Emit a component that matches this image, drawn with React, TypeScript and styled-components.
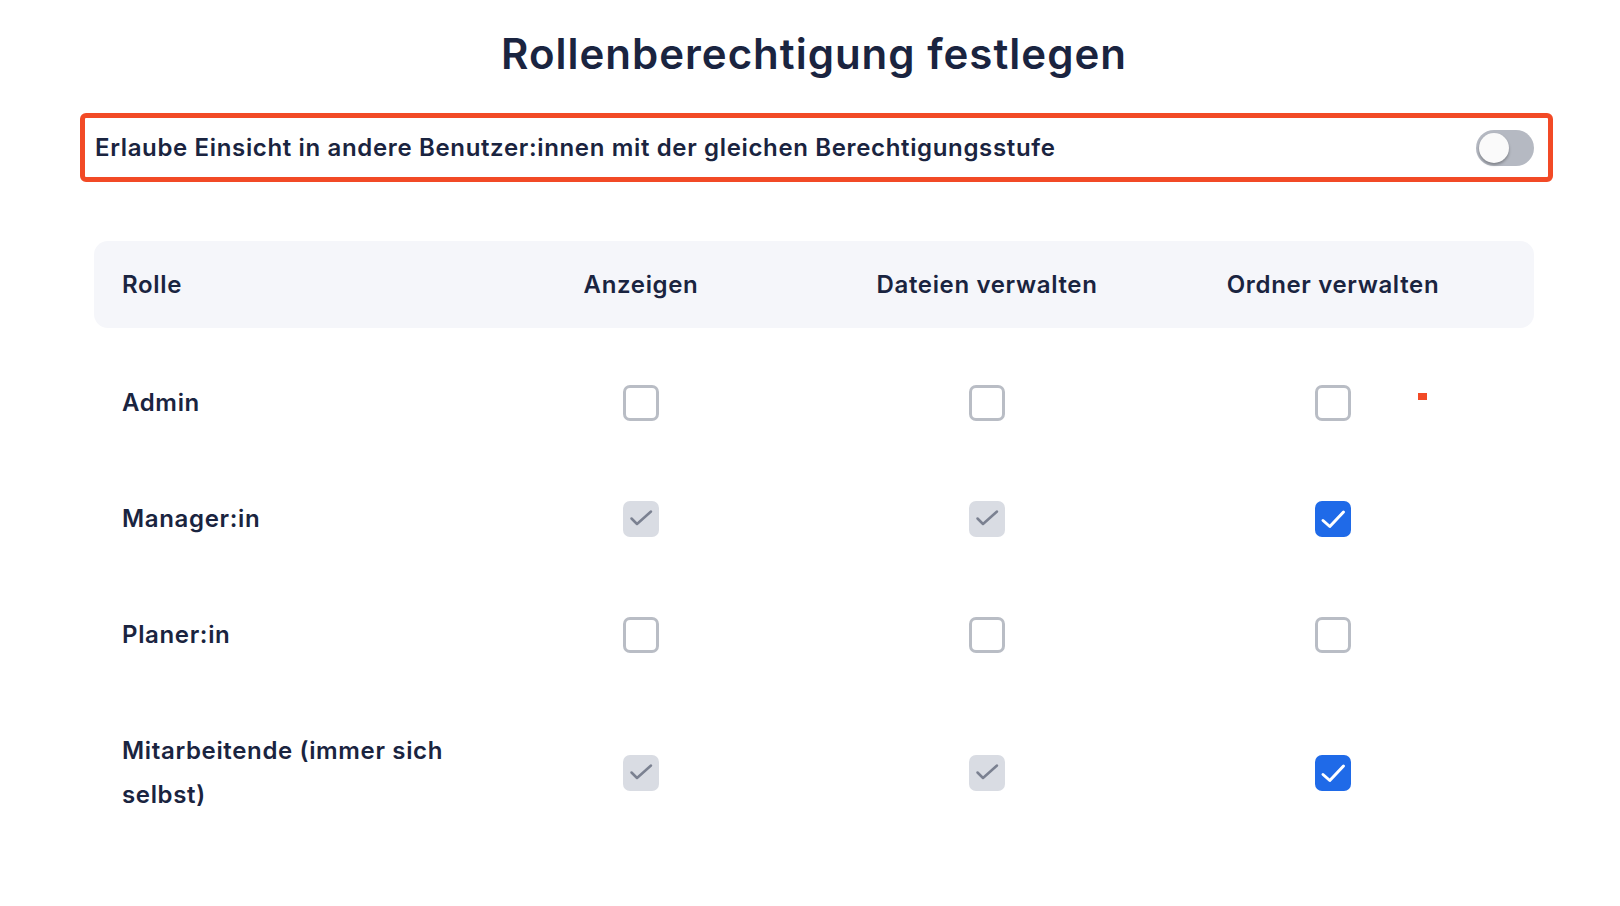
import React from 'react';
import styled, { createGlobalStyle } from 'styled-components';

const GlobalStyle = createGlobalStyle`
  html, body {
    margin: 0;
    padding: 0;
    background: #ffffff;
  }
  body {
    font-family: Inter, "Noto Sans", "Liberation Sans", sans-serif;
    color: #1a2440;
  }
`;

const ink = '#1a2440';

const Page = styled.div`
  width: 1440px;
  padding: 25px 0 40px 94px;
`;

const Title = styled.h1`
  margin: 0;
  font-size: 42px;
  line-height: 58px;
  font-weight: 600;
  text-align: center;
  color: ${ink};
  letter-spacing: 1px;
`;

const Banner = styled.div`
  box-sizing: border-box;
  margin: 30px 0 0 -14px;
  width: 1473px;
  height: 69px;
  border: 5px solid #f24a26;
  border-radius: 6px;
  padding: 0 14px 0 10px;
  display: flex;
  align-items: center;
  justify-content: space-between;
`;

const BannerText = styled.span`
  font-size: 24px;
  font-weight: 600;
  letter-spacing: 0.65px;
  color: ${ink};
`;

const Track = styled.div<{ $on?: boolean }>`
  position: relative;
  width: 58px;
  height: 36px;
  border-radius: 18px;
  background: ${(p) => (p.$on ? '#1f6ae8' : '#b5b9c2')};
`;

const Knob = styled.span`
  position: absolute;
  top: 3px;
  left: 3px;
  width: 30px;
  height: 30px;
  border-radius: 50%;
  background: #fafafa;
  box-shadow: 0 2px 3px rgba(0, 0, 0, 0.3);
`;

const Table = styled.div`
  margin-top: 59px;
`;

const grid = `
  display: grid;
  grid-template-columns: 346px 346px 346px 346px;
  padding: 0 28px;
  align-items: center;
`;

const HeadRow = styled.div`
  ${grid}
  height: 87px;
  background: #f5f6fa;
  border-radius: 14px;
`;

const HeadCell = styled.div<{ $center?: boolean }>`
  font-size: 24px;
  font-weight: 600;
  letter-spacing: 0.65px;
  color: ${ink};
  text-align: ${(p) => (p.$center ? 'center' : 'left')};
`;

const Body = styled.div`
  margin-top: 17px;
`;

const Row = styled.div`
  ${grid}
  padding-top: 36px;
  padding-bottom: 36px;
`;

const RoleName = styled.div`
  font-size: 24px;
  font-weight: 600;
  letter-spacing: 0.65px;
  line-height: 44px;
  color: ${ink};
  padding-right: 16px;
`;

const Cell = styled.div`
  position: relative;
  display: flex;
  justify-content: center;
  align-items: center;
`;

type BoxState = 'empty' | 'locked' | 'checked';

const Box = styled.div<{ $state: BoxState }>`
  box-sizing: border-box;
  width: 36px;
  height: 36px;
  border-radius: 7px;
  display: flex;
  align-items: center;
  justify-content: center;
  border: ${(p) => (p.$state === 'empty' ? '3px solid #b9bdc5' : 'none')};
  background: ${(p) =>
    p.$state === 'checked' ? '#1f6ae8' : p.$state === 'locked' ? '#d9dce3' : '#ffffff'};
`;

const Marker = styled.span`
  position: absolute;
  left: 258px;
  top: 8px;
  width: 9px;
  height: 7px;
  background: #f24a26;
`;

function Checkbox({ state }: { state: BoxState }) {
  return (
    <Box $state={state}>
      {state === 'checked' && (
        <svg width="36" height="36" viewBox="0 0 36 36">
          <path d="M8 19.5 L14.8 25.5 L28.5 11" fill="none" stroke="#fff" strokeWidth="3" strokeLinecap="round" strokeLinejoin="round" />
        </svg>
      )}
      {state === 'locked' && (
        <svg width="36" height="36" viewBox="0 0 36 36">
          <path d="M8.5 17.5 L14 23 L28 10.5" fill="none" stroke="#7b8191" strokeWidth="2.5" strokeLinecap="round" strokeLinejoin="round" />
        </svg>
      )}
    </Box>
  );
}

const roles: { name: string; perms: BoxState[] }[] = [
  { name: 'Admin', perms: ['empty', 'empty', 'empty'] },
  { name: 'Manager:in', perms: ['locked', 'locked', 'checked'] },
  { name: 'Planer:in', perms: ['empty', 'empty', 'empty'] },
  { name: 'Mitarbeitende (immer sich selbst)', perms: ['locked', 'locked', 'checked'] },
];

export default function App() {
  return (
    <>
      <GlobalStyle />
      <Page>
        <Title>Rollenberechtigung festlegen</Title>
        <Banner>
          <BannerText>Erlaube Einsicht in andere Benutzer:innen mit der gleichen Berechtigungsstufe</BannerText>
          <Track>
            <Knob />
          </Track>
        </Banner>
        <Table>
          <HeadRow>
            <HeadCell>Rolle</HeadCell>
            <HeadCell $center>Anzeigen</HeadCell>
            <HeadCell $center>Dateien verwalten</HeadCell>
            <HeadCell $center>Ordner verwalten</HeadCell>
          </HeadRow>
          <Body>
            {roles.map((r, i) => (
              <Row key={r.name}>
                <RoleName>{r.name}</RoleName>
                {r.perms.map((p, j) => (
                  <Cell key={j}>
                    <Checkbox state={p} />
                    {i === 0 && j === 2 && <Marker />}
                  </Cell>
                ))}
              </Row>
            ))}
          </Body>
        </Table>
      </Page>
    </>
  );
}
